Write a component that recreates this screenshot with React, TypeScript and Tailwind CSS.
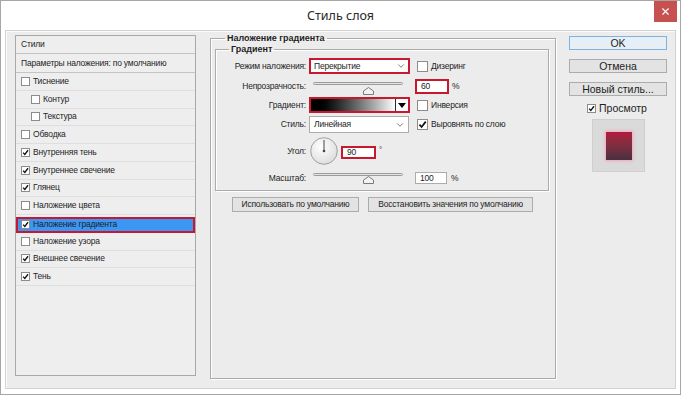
import { ChevronDown, X } from 'lucide-react'

const layerStyles = [
  { label: 'Тиснение', checked: false, indent: false },
  { label: 'Контур', checked: false, indent: true },
  { label: 'Текстура', checked: false, indent: true },
  { label: 'Обводка', checked: false, indent: false },
  { label: 'Внутренняя тень', checked: true, indent: false },
  { label: 'Внутреннее свечение', checked: true, indent: false },
  { label: 'Глянец', checked: true, indent: false },
  { label: 'Наложение цвета', checked: false, indent: false },
  { label: 'Наложение градиента', checked: true, indent: false, active: true },
  { label: 'Наложение узора', checked: false, indent: false },
  { label: 'Внешнее свечение', checked: true, indent: false },
  { label: 'Тень', checked: true, indent: false },
]

function Check({ checked, small }: { checked: boolean; small?: boolean }) {
  return (
    <span
      className={`flex shrink-0 items-center justify-center border border-[#8c8c8c] bg-white ${
        small ? 'h-[9px] w-[9px]' : 'h-[11px] w-[11px]'
      }`}
    >
      {checked && (
        <svg viewBox="0 0 10 10" className="h-full w-full">
          <path d="M1.6 5.2 L4 7.8 L8.6 1.8" fill="none" stroke="#111" strokeWidth="1.9" />
        </svg>
      )}
    </span>
  )
}

function Slider({ top }: { top: 'high' | 'low' }) {
  return (
    <div className="relative ml-[4px] h-full w-[90px]">
      <div
        className={`h-[3px] w-full rounded-full border border-[#9c9c9c] bg-[#e2e2e2] ${
          top === 'high' ? 'mt-[1px]' : 'mt-[3px]'
        }`}
      />
      <svg
        className={`absolute left-[50px] ${top === 'high' ? 'top-[3px]' : 'top-[5px]'}`}
        width="11"
        height="8"
        viewBox="0 0 11 8"
      >
        <path d="M5.5 0.5 L10.5 4 L10.5 7.5 L0.5 7.5 L0.5 4 Z" fill="#f2f2f2" stroke="#7a7a7a" />
      </svg>
    </div>
  )
}

function Label({ children }: { children: string }) {
  return <span className="w-[90px] shrink-0 text-right">{children}</span>
}

export default function App() {
  return (
    <div className="flex h-[395px] w-[681px] flex-col border border-[#a6a6a6] bg-white font-['Liberation_Sans',Arial,sans-serif] text-[8.5px] leading-[11px] tracking-[-0.2px] text-[#1e1e1e]">
      <div className="relative flex h-[29px] shrink-0 items-center justify-center">
        <span className="font-['Noto_Sans',sans-serif] text-[12.5px] tracking-normal text-[#2a2a2a]">Стиль слоя</span>
        <div className="absolute right-[3px] top-0 flex h-[21px] w-[23px] items-center justify-center bg-[#c75050]">
          <X size={11} color="#fff" strokeWidth={2.5} />
        </div>
      </div>

      <div className="ml-[4px] flex h-[359px] w-[671px] items-start border border-[#d2d2d2] bg-[#ececec] pl-[9px] shadow-[inset_1px_1px_0_#fafafa]">
        {/* styles list */}
        <div className="mt-[4px] h-[341px] w-[181px] shrink-0 border border-[#a9a9a9] bg-[#eeeeee]">
          <div className="flex h-[18px] items-center border-b border-[#c4c4c4] pl-[5px]">Стили</div>
          <div className="flex h-[19px] items-center border-b border-[#c4c4c4] pl-[5px]">
            Параметры наложения: по умолчанию
          </div>
          {layerStyles.map((s) =>
            s.active ? (
              <div key={s.label} className="flex h-[17.75px] items-end">
                <div className="flex h-[16px] w-full items-center border-2 border-[#c8182f] bg-[#3b97f3] pl-[3px]">
                  <Check checked={s.checked} small />
                  <span className="ml-[3px]">{s.label}</span>
                </div>
              </div>
            ) : (
              <div
                key={s.label}
                className={`flex h-[17.75px] items-center border-b border-[#dedede] ${
                  s.indent ? 'pl-[15px]' : 'pl-[5px]'
                }`}
              >
                <Check checked={s.checked} small />
                <span className="ml-[3px]">{s.label}</span>
              </div>
            ),
          )}
        </div>

        {/* gradient overlay */}
        <div className="ml-[14px] mt-[2px] flex shrink-0 flex-col">
          <fieldset className="h-[346px] w-[345px] border border-[#ababab] pl-[4px] pr-[6px] shadow-[inset_1px_1px_0_#fff,1px_1px_0_#fff]">
            <legend className="ml-[10px] px-[2px] text-[9px] font-bold leading-[11px] tracking-normal">
              Наложение градиента
            </legend>
            <fieldset className="w-[334px] border border-[#ababab] pb-[6px] pt-[3px] shadow-[inset_1px_1px_0_#fff,1px_1px_0_#fff]">
              <legend className="ml-[13px] px-[2px] text-[9px] font-bold leading-[11px] tracking-normal">Градиент</legend>

              <div className="flex h-[16px] items-center">
                <Label>Режим наложения:</Label>
                <div className="ml-[3px] flex h-[16px] w-[101px] items-center justify-between border-2 border-[#c8182f] bg-white pl-[3px] pr-[2px]">
                  <span>Перекрытие</span>
                  <ChevronDown size={10} strokeWidth={1.5} color="#333" />
                </div>
                <span className="ml-[7px] flex items-center">
                  <Check checked={false} />
                  <span className="ml-[3px]">Дизеринг</span>
                </span>
              </div>

              <div className="mt-[5px] flex h-[15px] items-center">
                <Label>Непрозрачность:</Label>
                <div className="ml-[3px] h-full w-[101px]">
                  <Slider top="low" />
                </div>
                <div className="ml-[5px] flex h-[15px] w-[34px] items-center border-2 border-[#c8182f] bg-white pl-[4px]">
                  60
                </div>
                <span className="ml-[3px]">%</span>
              </div>

              <div className="mt-[3px] flex h-[16px] items-center">
                <Label>Градиент:</Label>
                <div className="ml-[3px] flex h-[16px] w-[101px] border-2 border-[#c8182f] bg-white">
                  <div className="flex-1 bg-gradient-to-r from-black from-[5%] to-white" />
                  <div className="flex w-[13px] items-center justify-center border-l border-[#2a2a2a]">
                    <svg width="8" height="5" viewBox="0 0 8 5">
                      <path d="M0 0 L8 0 L4 5 Z" fill="#000" />
                    </svg>
                  </div>
                </div>
                <span className="ml-[7px] flex items-center">
                  <Check checked={false} />
                  <span className="ml-[3px]">Инверсия</span>
                </span>
              </div>

              <div className="mt-[3px] flex h-[17px] items-center">
                <Label>Стиль:</Label>
                <div className="ml-[3px] flex h-[17px] w-[100px] items-center justify-between border border-[#acacac] bg-white pl-[4px] pr-[3px]">
                  <span>Линейная</span>
                  <ChevronDown size={10} strokeWidth={1.5} color="#333" />
                </div>
                <span className="ml-[8px] flex items-center">
                  <Check checked />
                  <span className="ml-[3px]">Выровнять по слою</span>
                </span>
              </div>

              <div className="mt-[4px] flex h-[28px] items-center">
                <Label>Угол:</Label>
                <svg className="ml-[4px]" width="28" height="28" viewBox="0 0 28 28">
                  <defs>
                    <radialGradient id="dial" cx="40%" cy="35%" r="70%">
                      <stop offset="0%" stopColor="#ffffff" />
                      <stop offset="100%" stopColor="#dcdcdc" />
                    </radialGradient>
                  </defs>
                  <circle cx="14" cy="14" r="13.3" fill="url(#dial)" stroke="#a0a0a0" />
                  <line x1="14" y1="14" x2="14" y2="3" stroke="#444" strokeWidth="1" />
                  <circle cx="14" cy="14" r="1.3" fill="#444" />
                </svg>
                <div className="ml-[3px] mt-[3px] flex h-[13px] w-[35px] items-center border-2 border-[#c8182f] bg-white pl-[4px]">
                  90
                </div>
                <span className="mb-[4px] ml-[3px] text-[8px]">°</span>
              </div>

              <div className="mt-[7px] flex h-[12px] items-center">
                <Label>Масштаб:</Label>
                <div className="ml-[3px] h-full w-[101px]">
                  <Slider top="high" />
                </div>
                <div className="ml-[5px] flex h-[12px] w-[32px] items-center border border-[#acacac] bg-white pl-[4px]">
                  100
                </div>
                <span className="ml-[4px]">%</span>
              </div>
            </fieldset>

            <div className="ml-[17px] mt-[6px] flex gap-[9px]">
              <div className="flex h-[15px] w-[127px] items-center justify-center border border-[#acacac] bg-[#e3e3e3]">
                Использовать по умолчанию
              </div>
              <div className="flex h-[15px] w-[165px] items-center justify-center border border-[#acacac] bg-[#e3e3e3]">
                Восстановить значения по умолчанию
              </div>
            </div>
          </fieldset>
        </div>

        {/* buttons */}
        <div className="ml-[13px] mt-[5px] flex w-[98px] shrink-0 flex-col text-[10.5px] leading-[13px] tracking-normal">
          <div className="flex h-[14px] items-center justify-center border border-[#7fb2dd] bg-[#e6eef6]">OK</div>
          <div className="mt-[9px] flex h-[14px] items-center justify-center border border-[#acacac] bg-[#e3e3e3]">
            Отмена
          </div>
          <div className="mt-[9px] flex h-[14px] items-center justify-center border border-[#acacac] bg-[#e3e3e3]">
            Новый стиль...
          </div>
          <div className="ml-[18px] mt-[6px] flex h-[12px] items-center">
            <Check checked small />
            <span className="ml-[3px]">Просмотр</span>
          </div>
          <div className="ml-[23px] mt-[5px] flex h-[53px] w-[53px] items-center justify-center border border-[#cfcfcf] bg-[#dadada]">
            <div className="h-[28px] w-[26px] bg-gradient-to-b from-[#b0193f] to-[#4a2f3f] shadow-[0_0_3px_1px_#f3a6b8]" />
          </div>
        </div>
      </div>
    </div>
  )
}
